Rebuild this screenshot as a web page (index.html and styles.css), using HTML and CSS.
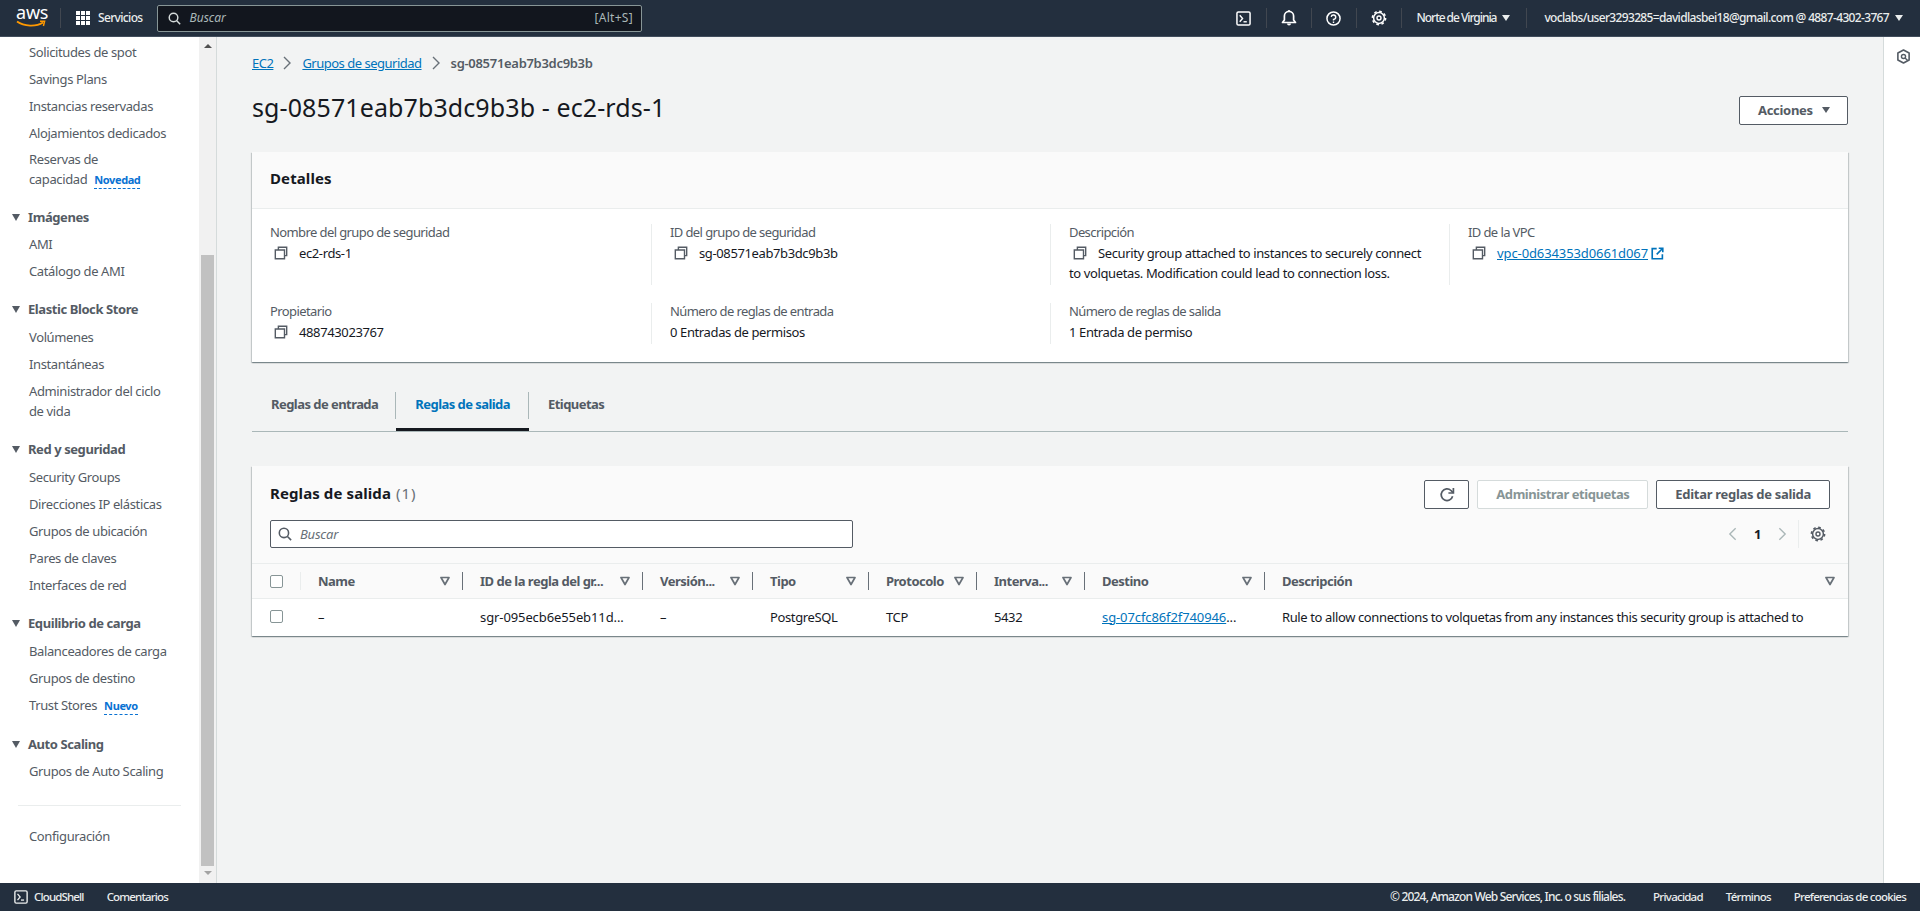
FILE: index.html
```html
<!DOCTYPE html>
<html lang="es">
<head>
  <meta charset="UTF-8">
  <title>sg-08571eab7b3dc9b3b - ec2-rds-1</title>
  <link rel="stylesheet" href="styles.css">
</head>
<body>
  <svg class="sprites" width="0" height="0">
    <symbol id="i-copy" viewBox="0 0 16 16"><path d="M5 4V1.5h9.5V11H12M1.5 4.5H12v10H1.5z" fill="none" stroke="currentColor" stroke-width="1.6"/></symbol>
    <symbol id="i-search" viewBox="0 0 16 16"><circle cx="6.8" cy="6.8" r="5.3" fill="none" stroke="currentColor" stroke-width="1.8"/><path d="M10.8 10.8 15 15" stroke="currentColor" stroke-width="1.8"/></symbol>
    <symbol id="i-shell" viewBox="0 0 16 16"><rect x="1" y="1" width="14" height="14" rx="1.5" fill="none" stroke="currentColor" stroke-width="1.6"/><path d="M4 4.5 7 8l-3 3.5" fill="none" stroke="currentColor" stroke-width="1.5"/><path d="M8 11.5h3.5" stroke="currentColor" stroke-width="1.5"/></symbol>
    <symbol id="i-bell" viewBox="0 0 16 16"><path d="M1.5 12.5h13L12.6 10V6A4.6 4.6 0 0 0 3.4 6v4z" fill="none" stroke="currentColor" stroke-width="1.7" stroke-linejoin="round"/><path d="M6 13.5a2 2 0 0 0 4 0z" fill="currentColor"/><path d="M8 0v2" stroke="currentColor" stroke-width="1.5"/></symbol>
    <symbol id="i-help" viewBox="0 0 16 16"><circle cx="8" cy="8" r="7" fill="none" stroke="currentColor" stroke-width="1.6"/><path d="M5.6 6.2A2.4 2.4 0 1 1 8 9v1.2" fill="none" stroke="currentColor" stroke-width="1.5"/><path d="M8 11.2v1.6" stroke="currentColor" stroke-width="1.5"/></symbol>
    <symbol id="i-gear" viewBox="0 0 16 16"><circle cx="8" cy="8" r="5.4" fill="none" stroke="currentColor" stroke-width="1.5"/><circle cx="8" cy="8" r="6.6" fill="none" stroke="currentColor" stroke-width="1.6" stroke-dasharray="2.6 2.58"/><circle cx="8" cy="8" r="2" fill="none" stroke="currentColor" stroke-width="1.4"/></symbol>
    <symbol id="i-external" viewBox="0 0 16 16"><path d="M7 2H1.5v12.5H14V9" fill="none" stroke="currentColor" stroke-width="2"/><path d="M9.5 1.5h5v5M14.5 1.5 7 9" fill="none" stroke="currentColor" stroke-width="2"/></symbol>
    <symbol id="i-refresh" viewBox="0 0 16 16"><path d="M13.6 9.2A5.8 5.8 0 1 1 12 3.5L14 5.6" fill="none" stroke="currentColor" stroke-width="1.7"/><path d="M14.4 1v5h-5" fill="none" stroke="currentColor" stroke-width="1.7"/></symbol>
    <symbol id="i-filter" viewBox="0 0 10 10"><path d="M1 1.5h8L5 8.5z" fill="none" stroke="currentColor" stroke-width="1.7" stroke-linejoin="round"/></symbol>
    <symbol id="i-panel" viewBox="0 0 16 16"><path d="M8 1 14 4.3v7.4L8 15l-6-3.3V4.3z" fill="none" stroke="currentColor" stroke-width="1.7" stroke-linejoin="round"/><circle cx="8" cy="8" r="2.2" fill="none" stroke="currentColor" stroke-width="1.5"/><path d="m9.6 9.6 2.6 2.4" stroke="currentColor" stroke-width="1.5"/></symbol>
  </svg>

  <header class="topbar">
    <div class="logo">
      <span class="logo-text">aws</span>
      <svg class="logo-smile" viewBox="0 0 30 8"><path d="M1 1.5C8 6.5 20 7 27 2.5" fill="none" stroke="#ff9900" stroke-width="1.8"/><path d="M24 1.2h4.6L27.4 6" fill="none" stroke="#ff9900" stroke-width="1.5"/></svg>
    </div>
    <div class="services">
      <span class="dots"><i></i><i></i><i></i><i></i><i></i><i></i><i></i><i></i><i></i></span>
      <span>Servicios</span>
    </div>
    <div class="top-search">
      <svg class="icon-13"><use href="#i-search"/></svg>
      <span class="top-search-text">Buscar</span>
      <span class="top-search-key">[Alt+S]</span>
    </div>
    <nav class="top-right">
      <span class="top-icon"><svg class="icon-15"><use href="#i-shell"/></svg></span>
      <span class="top-icon"><svg class="icon-16"><use href="#i-bell"/></svg></span>
      <span class="top-icon"><svg class="icon-15"><use href="#i-help"/></svg></span>
      <span class="top-icon"><svg class="icon-16"><use href="#i-gear"/></svg></span>
      <span class="top-menu top-region">Norte de Virginia<b class="caret"></b></span>
      <span class="top-menu top-user">voclabs/user3293285=davidlasbei18@gmail.com @ 4887-4302-3767<b class="caret"></b></span>
    </nav>
  </header>

  <div class="workspace">
    <aside class="sidebar">
      <div class="nav">
        <a class="nav-item">Solicitudes de spot</a>
        <a class="nav-item">Savings Plans</a>
        <a class="nav-item">Instancias reservadas</a>
        <a class="nav-item">Alojamientos dedicados</a>
        <a class="nav-item nav-wrap">Reservas de<br>capacidad <span class="badge">Novedad</span></a>

        <div class="nav-head">Imágenes</div>
        <a class="nav-item">AMI</a>
        <a class="nav-item">Catálogo de AMI</a>

        <div class="nav-head">Elastic Block Store</div>
        <a class="nav-item">Volúmenes</a>
        <a class="nav-item">Instantáneas</a>
        <a class="nav-item">Administrador del ciclo<br>de vida</a>

        <div class="nav-head">Red y seguridad</div>
        <a class="nav-item">Security Groups</a>
        <a class="nav-item">Direcciones IP elásticas</a>
        <a class="nav-item">Grupos de ubicación</a>
        <a class="nav-item">Pares de claves</a>
        <a class="nav-item">Interfaces de red</a>

        <div class="nav-head">Equilibrio de carga</div>
        <a class="nav-item">Balanceadores de carga</a>
        <a class="nav-item">Grupos de destino</a>
        <a class="nav-item">Trust Stores <span class="badge">Nuevo</span></a>

        <div class="nav-head">Auto Scaling</div>
        <a class="nav-item">Grupos de Auto Scaling</a>

        <hr class="nav-line">
        <a class="nav-item">Configuración</a>
      </div>
      <div class="scrollbar">
        <span class="scroll-up"></span>
        <span class="scroll-thumb"></span>
        <span class="scroll-down"></span>
      </div>
    </aside>

    <main class="content">
      <div class="breadcrumbs">
        <a class="link">EC2</a>
        <svg class="crumb-sep" viewBox="0 0 8 14"><path d="m1 1 6 6-6 6" fill="none" stroke="currentColor" stroke-width="1.4"/></svg>
        <a class="link">Grupos de seguridad</a>
        <svg class="crumb-sep" viewBox="0 0 8 14"><path d="m1 1 6 6-6 6" fill="none" stroke="currentColor" stroke-width="1.4"/></svg>
        <span class="crumb-current">sg-08571eab7b3dc9b3b</span>
      </div>

      <div class="title-row">
        <h1>sg-08571eab7b3dc9b3b - ec2-rds-1</h1>
        <button class="btn btn-actions">Acciones<b class="caret"></b></button>
      </div>

      <section class="card">
        <div class="card-head">
          <h2>Detalles</h2>
        </div>
        <div class="details">
          <div class="field">
            <div class="field-label">Nombre del grupo de seguridad</div>
            <div class="field-value"><svg class="copy"><use href="#i-copy"/></svg>ec2-rds-1</div>
          </div>
          <div class="field">
            <div class="field-label">ID del grupo de seguridad</div>
            <div class="field-value"><svg class="copy"><use href="#i-copy"/></svg>sg-08571eab7b3dc9b3b</div>
          </div>
          <div class="field">
            <div class="field-label">Descripción</div>
            <div class="field-value"><svg class="copy"><use href="#i-copy"/></svg>Security group attached to instances to securely connect<br>to volquetas. Modification could lead to connection loss.</div>
          </div>
          <div class="field">
            <div class="field-label">ID de la VPC</div>
            <div class="field-value"><svg class="copy"><use href="#i-copy"/></svg><a class="link">vpc-0d634353d0661d067</a><svg class="external"><use href="#i-external"/></svg></div>
          </div>
          <div class="field">
            <div class="field-label">Propietario</div>
            <div class="field-value"><svg class="copy"><use href="#i-copy"/></svg>488743023767</div>
          </div>
          <div class="field">
            <div class="field-label">Número de reglas de entrada</div>
            <div class="field-value">0 Entradas de permisos</div>
          </div>
          <div class="field">
            <div class="field-label">Número de reglas de salida</div>
            <div class="field-value">1 Entrada de permiso</div>
          </div>
        </div>
      </section>

      <div class="tabs">
        <a class="tab tab-first"><span class="tab-label">Reglas de entrada</span></a>
        <a class="tab tab-active"><span class="tab-label">Reglas de salida</span></a>
        <a class="tab tab-last"><span class="tab-label">Etiquetas</span></a>
      </div>

      <section class="card rules">
        <div class="rules-head">
          <div class="rules-top">
            <h2>Reglas de salida <span class="count">(1)</span></h2>
            <div class="rules-actions">
              <button class="btn btn-icon"><svg class="icon-16"><use href="#i-refresh"/></svg></button>
              <button class="btn btn-disabled">Administrar etiquetas</button>
              <button class="btn">Editar reglas de salida</button>
            </div>
          </div>
          <div class="rules-tools">
            <div class="table-search">
              <svg class="icon-14"><use href="#i-search"/></svg>
              <span>Buscar</span>
            </div>
            <div class="pager">
              <svg class="pager-arrow" viewBox="0 0 10 16"><path d="M8.5 1.5 2 8l6.5 6.5" fill="none" stroke="currentColor" stroke-width="1.5"/></svg>
              <span class="pager-num">1</span>
              <svg class="pager-arrow" viewBox="0 0 10 16"><path d="M1.5 1.5 8 8l-6.5 6.5" fill="none" stroke="currentColor" stroke-width="1.5"/></svg>
              <span class="pager-gear"><svg class="icon-16"><use href="#i-gear"/></svg></span>
            </div>
          </div>
        </div>

        <div class="table">
          <div class="th th-check"><span class="checkbox"></span></div>
          <div class="th th-first">Name<svg class="filter"><use href="#i-filter"/></svg></div>
          <div class="th">ID de la regla del gr...<svg class="filter"><use href="#i-filter"/></svg></div>
          <div class="th">Versión...<svg class="filter"><use href="#i-filter"/></svg></div>
          <div class="th">Tipo<svg class="filter"><use href="#i-filter"/></svg></div>
          <div class="th">Protocolo<svg class="filter"><use href="#i-filter"/></svg></div>
          <div class="th">Interva...<svg class="filter"><use href="#i-filter"/></svg></div>
          <div class="th">Destino<svg class="filter"><use href="#i-filter"/></svg></div>
          <div class="th th-last">Descripción<svg class="filter"><use href="#i-filter"/></svg></div>

          <div class="td td-check"><span class="checkbox"></span></div>
          <div class="td">–</div>
          <div class="td td-code">sgr-095ecb6e55eb11d...</div>
          <div class="td">–</div>
          <div class="td">PostgreSQL</div>
          <div class="td">TCP</div>
          <div class="td">5432</div>
          <div class="td td-code"><a class="link">sg-07cfc86f2f740946</a>...</div>
          <div class="td">Rule to allow connections to volquetas from any instances this security group is attached to</div>
        </div>
      </section>
    </main>

    <aside class="side-panel">
      <svg class="icon-15"><use href="#i-panel"/></svg>
    </aside>
  </div>

  <footer class="footer">
    <span class="footer-shell"><svg class="icon-14"><use href="#i-shell"/></svg>CloudShell</span>
    <span class="footer-feedback">Comentarios</span>
    <span class="footer-legal">© 2024, Amazon Web Services, Inc. o sus filiales.</span>
    <span class="footer-link">Privacidad</span>
    <span class="footer-link">Términos</span>
    <span class="footer-link">Preferencias de cookies</span>
  </footer>
</body>
</html>
```

FILE: styles.css
```css
* {
  box-sizing: border-box;
}

html, body {
  height: 100%;
}

body {
  margin: 0;
  display: flex;
  flex-direction: column;
  overflow: hidden;
  background: #f2f3f3;
  color: #16191f;
  font-family: "Noto Sans", Arial, sans-serif;
  font-size: 13px;
  line-height: 20px;
  letter-spacing: -0.38px;
}

.sprites {
  position: absolute;
}

svg {
  display: block;
  flex: none;
}

.icon-13 {
  width: 13px;
  height: 13px;
}

.icon-14 {
  width: 14px;
  height: 14px;
}

.icon-15 {
  width: 15px;
  height: 15px;
}

.icon-16 {
  width: 16px;
  height: 16px;
}

h1, h2 {
  margin: 0;
}

.link {
  color: #0073bb;
  text-decoration: underline;
}

.caret {
  display: inline-block;
  width: 0;
  height: 0;
  border-left: 4px solid transparent;
  border-right: 4px solid transparent;
  border-top: 6px solid currentColor;
}

/* top bar */
.topbar {
  flex: none;
  height: 37px;
  display: flex;
  align-items: center;
  background: #232f3e;
  color: #eaeded;
  font-size: 12px;
  font-weight: 500;
  letter-spacing: -0.66px;
  border-bottom: 1px solid #414d5c;
}

.logo {
  flex: none;
  width: 45px;
  height: 20px;
  margin-left: 16px;
  border-right: 1px solid #414750;
  position: relative;
}

.logo-text {
  position: absolute;
  left: 0;
  top: -6px;
  color: #fff;
  font-size: 18px;
  font-weight: 400;
  line-height: 20px;
  letter-spacing: -0.2px;
}

.logo-smile {
  position: absolute;
  left: 0;
  top: 12px;
  width: 30px;
  height: 8px;
}

.services {
  display: flex;
  align-items: center;
  gap: 8px;
  margin-left: 15px;
  width: 81px;
  flex: none;
}

.dots {
  display: grid;
  grid-template-columns: repeat(3, 4px);
  grid-auto-rows: 4px;
  gap: 1px;
}

.dots i {
  background: #fff;
}

.top-search {
  flex: none;
  width: 485px;
  height: 27px;
  display: flex;
  align-items: center;
  padding: 0 8px 0 10px;
  background: #12161e;
  border: 1px solid #879596;
  border-radius: 2px;
  color: #d5dbdb;
}

.top-search-text {
  margin-left: 8.5px;
  font-style: italic;
  font-weight: 400;
  letter-spacing: 0;
  color: #aab7b8;
}

.top-search-key {
  margin-left: auto;
  font-weight: 400;
  letter-spacing: 0.3px;
  color: #aab7b8;
}

.top-right {
  margin-left: auto;
  display: flex;
  align-items: center;
  padding-right: 17px;
}

.top-icon {
  width: 45px;
  height: 20px;
  display: flex;
  align-items: center;
  justify-content: center;
  color: #fff;
  border-right: 1px solid #414750;
}

.top-menu {
  display: flex;
  align-items: center;
  gap: 6px;
  height: 20px;
  white-space: nowrap;
}

.top-region {
  padding: 0 16px 0 15px;
  border-right: 1px solid #414750;
  letter-spacing: -1.05px;
}

.top-user {
  padding-left: 17px;
}

/* layout */
.workspace {
  flex: 1;
  min-height: 0;
  display: flex;
}

.sidebar {
  flex: none;
  width: 217px;
  display: flex;
  background: #fff;
  border-right: 1px solid #d5dbdb;
}

.nav {
  width: 199px;
  padding-top: 1.5px;
  color: #545b64;
  font-size: 13px;
  overflow: hidden;
}

.nav-item {
  display: block;
  padding: 3.5px 0 3.5px 29px;
}

.nav-wrap {
  padding: 2px 0 2.5px 29px;
}

.nav-head {
  position: relative;
  margin-top: 14.5px;
  margin-bottom: 4.3px;
  padding-left: 28px;
  font-weight: 700;
  letter-spacing: -0.42px;
}

.nav-head::before {
  content: "";
  position: absolute;
  left: 12px;
  top: 7px;
  border-left: 4.5px solid transparent;
  border-right: 4.5px solid transparent;
  border-top: 7px solid #545b64;
}

.nav-line {
  margin: 20px 0 16.5px 18px;
  width: 163px;
  border: 0;
  border-top: 1px solid #eaeded;
}

.badge {
  margin-left: 4px;
  color: #0972d3;
  font-size: 11px;
  font-weight: 700;
  letter-spacing: -0.4px;
  border-bottom: 1px dashed #0972d3;
  padding-bottom: 1px;
}

.scrollbar {
  flex: none;
  width: 17px;
  background: #f1f1f1;
  padding: 0 2px;
  display: flex;
  flex-direction: column;
  align-items: center;
}

.scroll-up {
  margin-top: 7px;
  border-left: 4px solid transparent;
  border-right: 4px solid transparent;
  border-bottom: 4px solid #505050;
}

.scroll-thumb {
  width: 13px;
  height: 611px;
  margin-top: 207px;
  background: #c1c1c1;
}

.scroll-down {
  margin-top: 5px;
  border-left: 4px solid transparent;
  border-right: 4px solid transparent;
  border-top: 4px solid #a3a3a3;
}

.content {
  flex: 1;
  min-width: 0;
  padding: 16px 35px 0 35px;
}

.side-panel {
  flex: none;
  width: 37px;
  padding: 12px 0 0 12px;
  background: #fff;
  border-left: 1px solid #d5dbdb;
  color: #545b64;
}

/* heading */
.breadcrumbs {
  display: flex;
  align-items: center;
  height: 20px;
  color: #545b64;
  font-size: 13px;
  letter-spacing: -0.5px;
}

.crumb-sep {
  width: 8px;
  height: 14px;
  margin: 0 11px 0 10px;
  color: #687078;
}

.crumb-current {
  font-weight: 600;
  letter-spacing: -0.3px;
}

.title-row {
  display: flex;
  align-items: center;
  justify-content: space-between;
  margin-top: 23px;
}

h1 {
  font-size: 25px;
  font-weight: 400;
  line-height: 29px;
  margin-top: -6px;
  letter-spacing: 0.1px;
}

.btn {
  height: 29px;
  padding: 0 18px 2px;
  background: #fff;
  border: 1px solid #545b64;
  border-radius: 2px;
  color: #545b64;
  font: inherit;
  font-weight: 700;
  letter-spacing: -0.3px;
}

.btn-actions {
  display: flex;
  align-items: center;
  gap: 9px;
  width: 109px;
}

.btn-icon {
  width: 45px;
  padding: 0;
  display: flex;
  align-items: center;
  justify-content: center;
}

.btn-disabled {
  border-color: #d5dbdb;
  color: #879596;
  letter-spacing: -0.45px;
}

/* cards */
.card {
  margin-top: 27px;
  background: #fff;
  box-shadow: 0 1px 1px 0 rgba(0,28,36,0.3), 1px 1px 1px 0 rgba(0,28,36,0.15), -1px 1px 1px 0 rgba(0,28,36,0.15);
}

.card-head {
  height: 57px;
  padding: 0 18px 5px;
  display: flex;
  align-items: center;
  background: #fafafa;
  border-bottom: 1px solid #eaeded;
}

h2 {
  font-size: 15px;
  font-weight: 700;
  line-height: 20px;
  letter-spacing: 0.1px;
}

.details {
  display: grid;
  grid-template-columns: repeat(4, 1fr);
  row-gap: 18px;
  padding: 15px 0 18px;
}

.field {
  padding: 0 0 2px 18px;
  border-left: 1px solid #eaeded;
}

.field:first-child, .field:nth-child(5) {
  border-left: 0;
}

.field-label {
  margin: -2px 0 1px;
  color: #545b64;
  letter-spacing: -0.6px;
}

.copy {
  display: inline-block;
  vertical-align: -2px;
  margin: 0 11px 0 4px;
  width: 14px;
  height: 14px;
  color: #545b64;
}

.field-value .link {
  letter-spacing: -0.1px;
}

.external {
  display: inline-block;
  vertical-align: -2px;
  margin-left: 3px;
  width: 13px;
  height: 13px;
  color: #0073bb;
}

/* tabs */
.tabs {
  display: flex;
  margin-top: 28px;
  border-bottom: 1px solid #aab7b8;
}

.tab {
  padding-top: 2px;
  height: 41px;
  border-bottom: 3px solid transparent;
  color: #545b64;
  font-weight: 700;
  letter-spacing: -0.55px;
}

.tab-label {
  display: block;
  height: 27px;
  padding: 2px 18px 0 19px;
  border-right: 1px solid #aab7b8;
}

.tab-first .tab-label {
  padding-right: 17px;
}

.tab-active {
  color: #0073bb;
  border-bottom-color: #16191f;
}

.tab-last .tab-label {
  border-right: 0;
}

/* rules table */
.rules {
  margin-top: 34px;
}

.rules-head {
  padding: 14px 18px 15px;
  background: #fafafa;
}

.rules-top {
  display: flex;
  align-items: center;
  justify-content: space-between;
}

.rules-top h2 {
  margin-top: -4px;
}

.count {
  margin-left: 1px;
  color: #687078;
  font-weight: 400;
  letter-spacing: 1px;
}

.rules-actions {
  display: flex;
  gap: 8px;
}

.rules-tools {
  display: flex;
  align-items: center;
  justify-content: space-between;
  margin-top: 11px;
}

.table-search {
  width: 583px;
  height: 28px;
  display: flex;
  align-items: center;
  gap: 8px;
  padding-left: 7px;
  background: #fff;
  border: 1px solid #545b64;
  border-radius: 2px;
  color: #687078;
  font-style: italic;
  letter-spacing: -0.2px;
}

.table-search svg {
  color: #545b64;
}

.pager {
  display: flex;
  align-items: center;
  height: 28px;
  padding-right: 4px;
}

.pager-arrow {
  width: 9px;
  height: 16px;
  color: #aab7b8;
}

.pager-num {
  width: 41px;
  text-align: center;
  font-weight: 700;
}

.pager-gear {
  margin-left: 11px;
  padding-left: 11px;
  height: 28px;
  display: flex;
  align-items: center;
  border-left: 1px solid #eaeded;
  color: #545b64;
}

.table {
  display: grid;
  grid-template-columns: 48px 162px 180px 110px 116px 108px 108px 180px 1fr;
  grid-template-rows: 36px 37px;
}

.th, .td {
  display: flex;
  align-items: center;
  padding-left: 18px;
  white-space: nowrap;
  overflow: hidden;
}

.td {
  padding-bottom: 2px;
}

.td-code {
  letter-spacing: -0.1px;
}

.th {
  position: relative;
  background: #fafafa;
  border-top: 1px solid #eaeded;
  border-bottom: 1px solid #eaeded;
  color: #545b64;
  font-weight: 700;
  letter-spacing: -0.5px;
}

.th::before {
  content: "";
  position: absolute;
  left: 0;
  top: 8px;
  height: 18px;
  border-left: 1px solid #687078;
}

.th-check::before {
  display: none;
}

.th-first::before {
  border-left-color: #eaeded;
}

.filter {
  width: 10px;
  height: 10px;
  margin-left: auto;
  margin-right: 12px;
  color: #687078;
}

.th-last .filter {
  margin-right: 13px;
}

.checkbox {
  width: 13px;
  height: 13px;
  background: #fff;
  border: 1px solid #879596;
  border-radius: 2px;
}

/* footer */
.footer {
  flex: none;
  height: 28px;
  display: flex;
  align-items: center;
  background: #232f3e;
  color: #eaeded;
  font-size: 11.5px;
  font-weight: 500;
  letter-spacing: -0.75px;
}

.footer-shell {
  display: flex;
  align-items: center;
  gap: 6px;
  margin-left: 14px;
  letter-spacing: -0.85px;
}

.footer-feedback {
  margin-left: 23px;
  letter-spacing: -0.85px;
}

.footer-legal {
  margin-left: auto;
  margin-right: 28px;
  font-size: 12px;
  letter-spacing: -0.82px;
}

.footer-link {
  margin-right: 23px;
}

.footer-link:last-child {
  margin-right: 14px;
}
```
